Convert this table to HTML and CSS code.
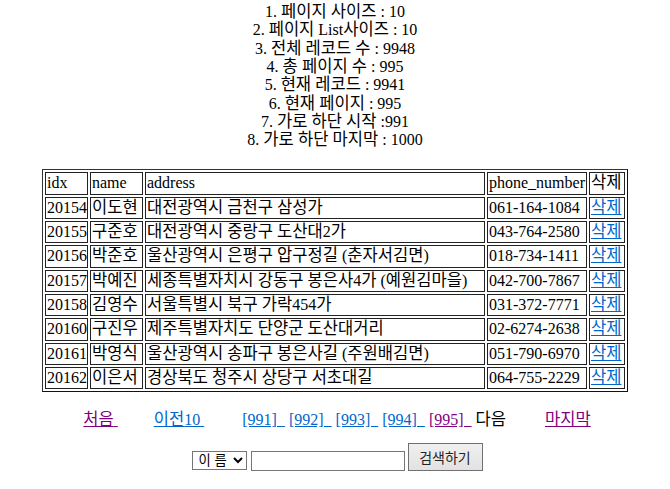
FILE: index.html
```html
<!DOCTYPE html>
<html lang="ko">
<head>
<meta charset="utf-8">
<title>목록</title>
<link rel="stylesheet" href="styles.css">
</head>
<body>
<div class="info">
  <div>1. <span class="k">페이지 사이즈</span> : 10</div>
  <div>2. <span class="k">페이지</span> List<span class="k">사이즈</span> : 10</div>
  <div>3. <span class="k">전체 레코드 수</span> : 9948</div>
  <div>4. <span class="k">총 페이지 수</span> : 995</div>
  <div>5. <span class="k">현재 레코드</span> : 9941</div>
  <div>6. <span class="k">현재 페이지</span> : 995</div>
  <div>7. <span class="k">가로 하단 시작</span> :991</div>
  <div>8. <span class="k">가로 하단 마지막</span> : 1000</div>
</div>

<table class="list">
  <tr><td class="c-idx">idx</td><td class="c-name">name</td><td class="c-addr">address</td><td class="c-phone">phone_number</td><td class="c-del"><span class="k">삭제</span></td></tr>
  <tr><td>20154</td><td><span class="k">이도현</span></td><td><span class="k">대전광역시 금천구 삼성가</span></td><td>061-164-1084</td><td><a href="#" class="k">삭제</a></td></tr>
  <tr><td>20155</td><td><span class="k">구준호</span></td><td><span class="k">대전광역시 중랑구 도산대</span>2<span class="k">가</span></td><td>043-764-2580</td><td><a href="#" class="k">삭제</a></td></tr>
  <tr><td>20156</td><td><span class="k">박준호</span></td><td><span class="k">울산광역시 은평구 압구정길</span> (<span class="k">춘자서김면</span>)</td><td>018-734-1411</td><td><a href="#" class="k">삭제</a></td></tr>
  <tr><td>20157</td><td><span class="k">박예진</span></td><td><span class="k">세종특별자치시 강동구 봉은사</span>4<span class="k">가</span> (<span class="k">예원김마을</span>)</td><td>042-700-7867</td><td><a href="#" class="k">삭제</a></td></tr>
  <tr><td>20158</td><td><span class="k">김영수</span></td><td><span class="k">서울특별시 북구 가락</span>454<span class="k">가</span></td><td>031-372-7771</td><td><a href="#" class="k">삭제</a></td></tr>
  <tr><td>20160</td><td><span class="k">구진우</span></td><td><span class="k">제주특별자치도 단양군 도산대거리</span></td><td>02-6274-2638</td><td><a href="#" class="k">삭제</a></td></tr>
  <tr><td>20161</td><td><span class="k">박영식</span></td><td><span class="k">울산광역시 송파구 봉은사길</span> (<span class="k">주원배김면</span>)</td><td>051-790-6970</td><td><a href="#" class="k">삭제</a></td></tr>
  <tr><td>20162</td><td><span class="k">이은서</span></td><td><span class="k">경상북도 청주시 상당구 서초대길</span></td><td>064-755-2229</td><td><a href="#" class="k">삭제</a></td></tr>
</table>

<div class="pager"><a class="visited" href="#"><span class="k">처음</span>&nbsp;</a><span class="gap g1"></span><a href="#"><span class="k">이전</span>10&nbsp;</a><span class="gap g2"></span><a href="#">[991]&nbsp;&nbsp;</a> <a href="#">[992]&nbsp;&nbsp;</a> <a href="#">[993]&nbsp;&nbsp;</a> <a href="#">[994]&nbsp;&nbsp;</a> <a class="visited" href="#">[995]&nbsp;&nbsp;</a> <span class="k">다음</span><span class="gap g3"></span><a class="visited" href="#"><span class="k">마지막</span></a></div>

<form class="search" onsubmit="return false;">
  <select class="field-select"><option>이 름</option><option>주 소</option></select>
  <input class="field-input" type="text">
  <button class="btn" type="button">검색하기</button>
</form>
</body>
</html>
```
FILE: styles.css
```css
html, body {
  background: #ffffff;
}
body {
  margin: 3px 8px 8px;
  font-family: "Liberation Serif", "Noto Sans CJK KR", serif;
  font-size: 16px;
  color: #000000;
}
.k {
  font-size: 16.56px;
}
.info {
  text-align: center;
  line-height: 18.35px;
}
a {
  color: #0066cc;
  text-decoration: underline;
}
a.visited {
  color: #800080;
}
.list {
  table-layout: fixed;
  width: 586px;
  margin: 19.5px auto 0;
  border-collapse: separate;
  border-spacing: 2px;
  border: 1px solid #333333;
  border-right-color: #111111;
  border-bottom-color: #111111;
}
.list td {
  box-sizing: border-box;
  border: 1px solid #222222;
  padding: 1px;
  line-height: 18.35px;
  height: 22.35px;
  text-align: left;
  white-space: nowrap;
  overflow: hidden;
}
.c-idx { width: 43px; }
.c-name { width: 53px; }
.c-addr { width: 340px; }
.c-phone { width: 100px; }
.c-del { width: 36px; }
.pager {
  margin-top: 18.7px;
  padding-left: 4px;
  text-align: center;
  line-height: 18.35px;
}
.gap {
  display: inline-block;
}
.g1 { width: 36px; }
.g2 { width: 38px; }
.g3 { width: 39px; }
.search {
  margin: 14px 0 0;
  display: flex;
  justify-content: center;
  align-items: flex-end;
  padding-left: 4px;
}
.field-select {
  box-sizing: border-box;
  width: 55px;
  height: 19px;
  margin: 0 4px 1px 0;
  font-family: "Liberation Sans", "Noto Sans CJK KR", sans-serif;
  font-size: 13.33px;
  border: 1px solid #767676;
  border-radius: 0;
  background: #ffffff;
  color: #000000;
  padding: 0 0 0 2px;
}
.field-input {
  box-sizing: border-box;
  width: 154px;
  height: 20px;
  margin: 0 3px 0 0;
  border: 1px solid #767676;
  padding: 1px 2px;
  font-size: 13.33px;
}
.btn {
  box-sizing: border-box;
  width: 75px;
  height: 28px;
  margin: 0;
  border: 1px solid #707070;
  border-radius: 0;
  background: linear-gradient(#f0f0f0, #e2e2e2);
  font-family: "Liberation Sans", "Noto Sans CJK KR", sans-serif;
  font-size: 14px;
  color: #222222;
  padding: 0;
}
```
